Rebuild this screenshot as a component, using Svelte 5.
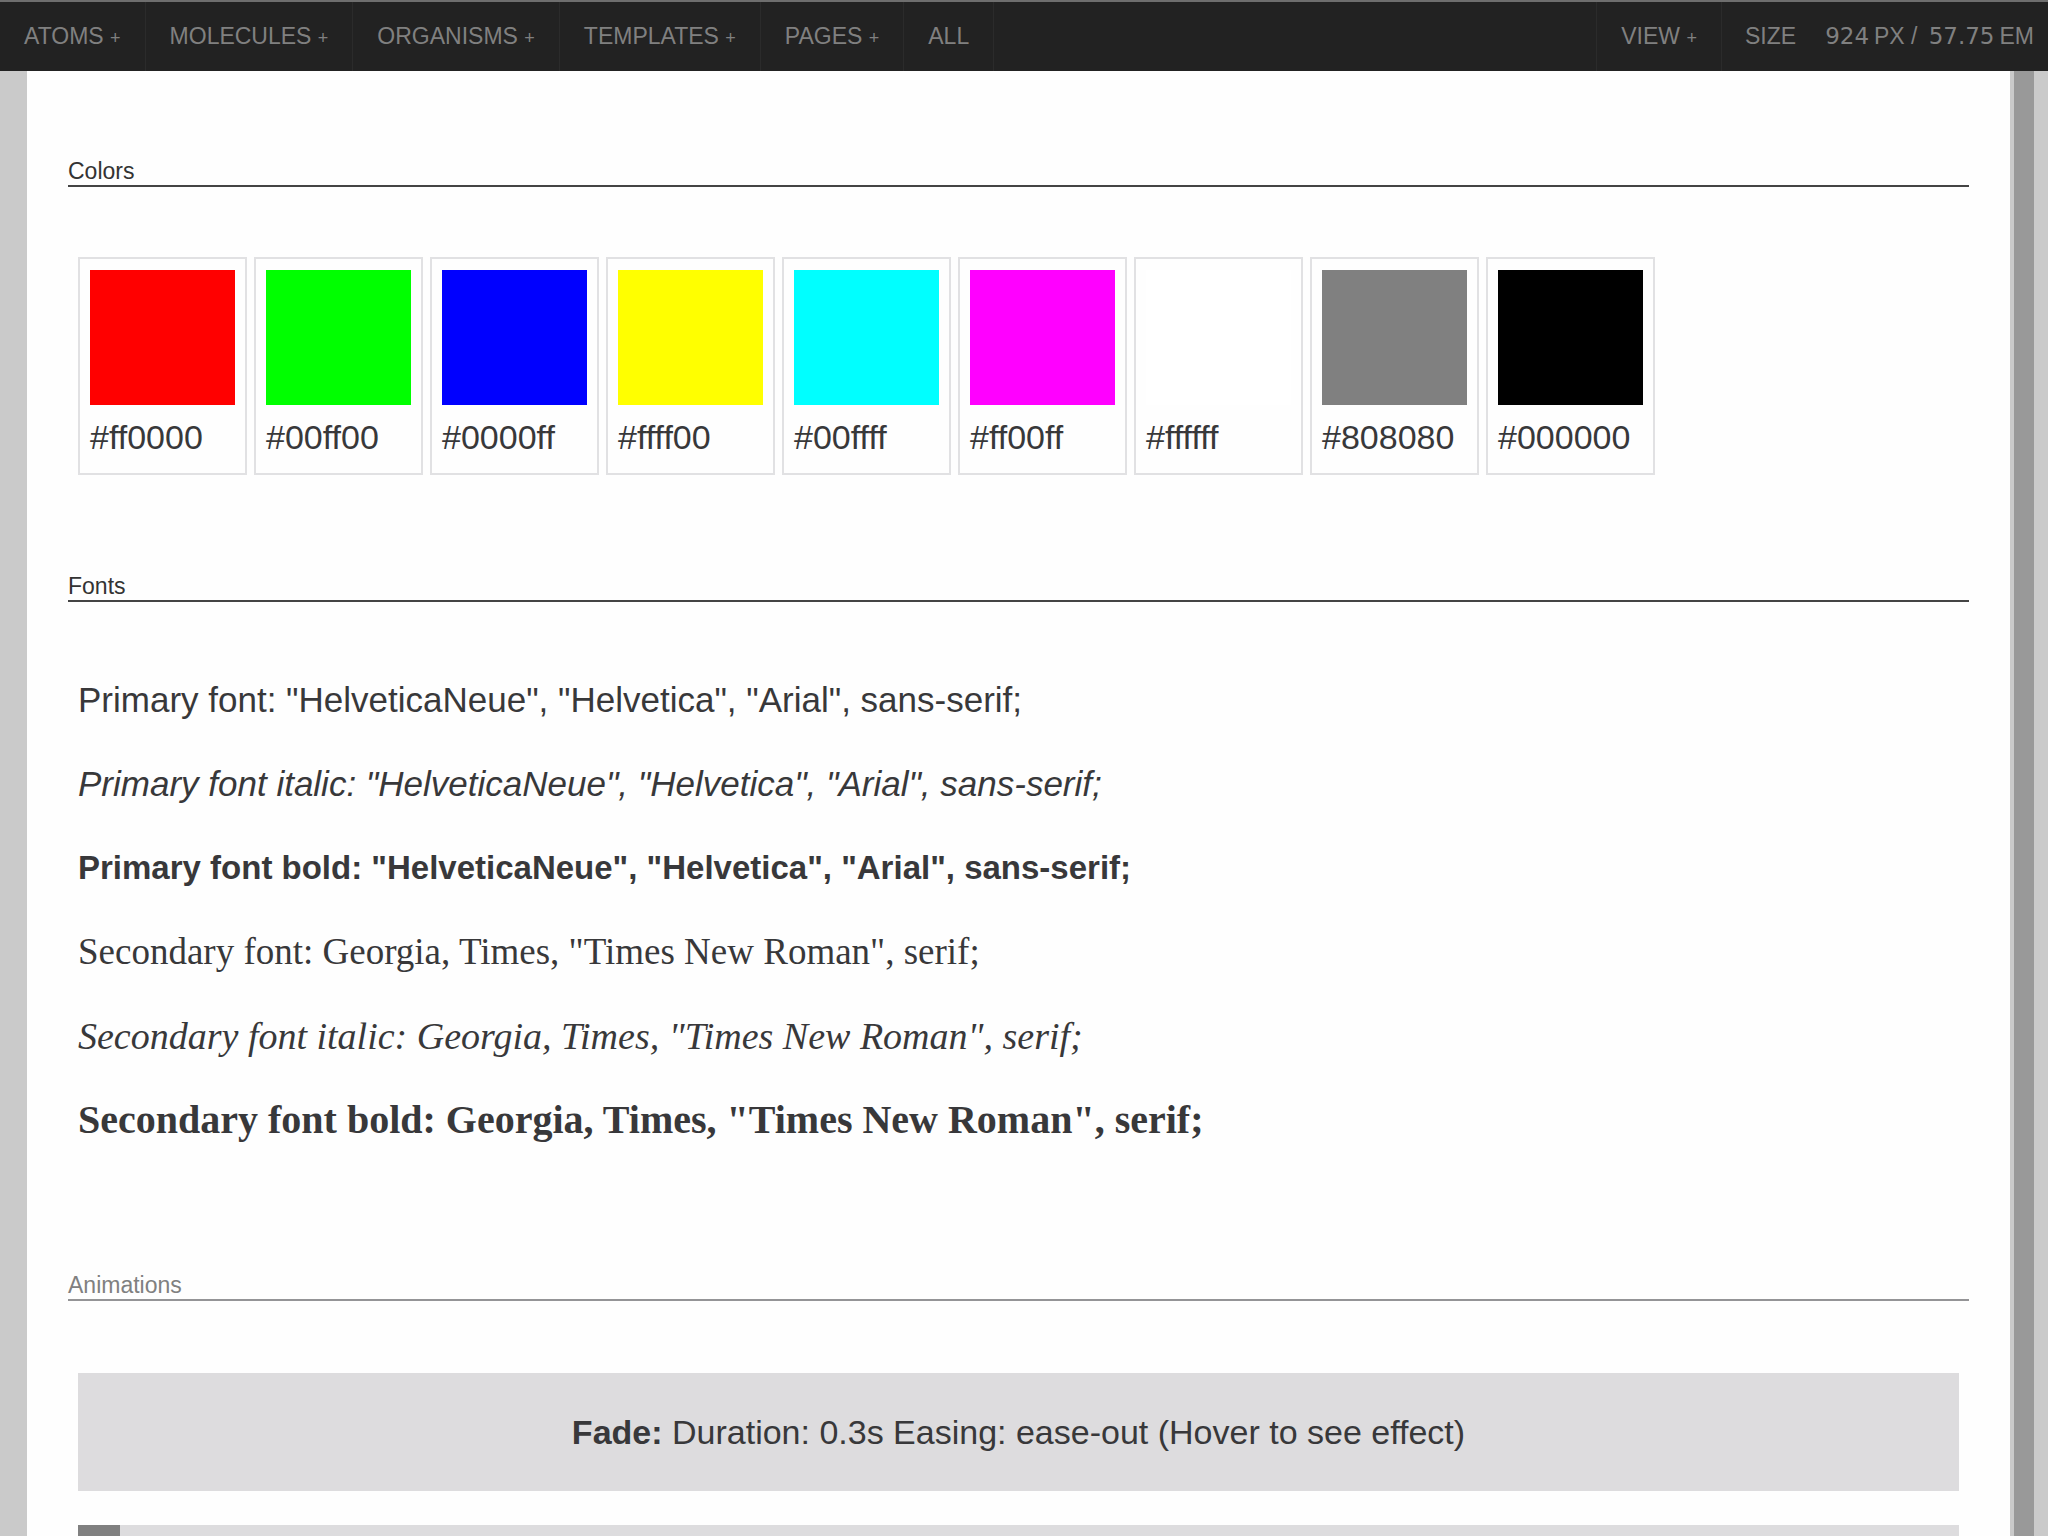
<script lang="ts">
  const patterns = [
    { label: 'Atoms', menu: true },
    { label: 'Molecules', menu: true },
    { label: 'Organisms', menu: true },
    { label: 'Templates', menu: true },
    { label: 'Pages', menu: true },
    { label: 'All', menu: false }
  ];

  const colors = [
    '#ff0000',
    '#00ff00',
    '#0000ff',
    '#ffff00',
    '#00ffff',
    '#ff00ff',
    '#ffffff',
    '#808080',
    '#000000'
  ];

  const primary = '"HelveticaNeue", "Helvetica", "Arial", sans-serif;';
  const secondary = 'Georgia, Times, "Times New Roman", serif;';

  let px = $state('924');
  let em = $state('57.75');
</script>

<div class="shell">
  <header class="bar">
    <nav class="nav">
      {#each patterns as item (item.label)}
        <a class="nav-item" href="#{item.label.toLowerCase()}">
          {item.label}{#if item.menu}&nbsp;<span class="plus">+</span>{/if}
        </a>
      {/each}
    </nav>
    <div class="controls">
      <button class="nav-item view" type="button">View&nbsp;<span class="plus">+</span></button>
      <form class="size" onsubmit={(e) => e.preventDefault()}>
        <label for="size-px">Size</label>
        <div class="fields">
          <input id="size-px" class="px" bind:value={px} />
          <span>px /</span>
          <input class="em" aria-label="Size in em" bind:value={em} />
          <span>em</span>
        </div>
      </form>
    </div>
  </header>

  <div class="viewport">
    <main class="page">
      <section class="pattern">
        <h2><a href="#colors">Colors</a></h2>
        <ul class="swatches">
          {#each colors as color (color)}
            <li>
              <span class="swatch" style="background: {color}"></span>
              <span class="label">{color}</span>
            </li>
          {/each}
        </ul>
      </section>

      <section class="pattern">
        <h2><a href="#fonts">Fonts</a></h2>
        <div class="fonts">
          <p class="primary">Primary font: {primary}</p>
          <p class="primary italic">Primary font italic: {primary}</p>
          <p class="primary bold">Primary font bold: {primary}</p>
          <p class="secondary">Secondary font: {secondary}</p>
          <p class="secondary italic">Secondary font italic: {secondary}</p>
          <p class="secondary bold">Secondary font bold: {secondary}</p>
        </div>
      </section>

      <section class="pattern">
        <h2 class="hovered"><a href="#animations">Animations</a></h2>
        <div class="demos">
          <div class="demo fade"><strong>Fade:</strong> Duration: 0.3s Easing: ease-out (Hover to see effect)</div>
          <div class="demo"><span class="mover"></span></div>
        </div>
      </section>
    </main>
    <div class="handle"></div>
  </div>
</div>

<style>
  :global(body) {
    background: #cacaca;
  }

  .shell {
    display: flex;
    flex-direction: column;
    height: 100vh;
    overflow: hidden;
    color: #38383a;
    font-family: "Liberation Sans", Arial, sans-serif;
    font-size: 34px;
    line-height: 50px;
  }

  .bar {
    display: flex;
    flex-shrink: 0;
    justify-content: space-between;
    height: 69px;
    background: #222;
    border-top: 2px solid #6e6e6e;
    color: #808080;
    font-size: 23px;
    line-height: 69px;
    text-transform: uppercase;
  }

  .nav,
  .controls,
  .size,
  .fields {
    display: flex;
  }

  .nav-item {
    padding: 0 24px;
    border: 0;
    border-right: 1px solid #2b2b2b;
    background: none;
    color: inherit;
    font: inherit;
    text-decoration: none;
    text-transform: inherit;
    white-space: nowrap;
    cursor: pointer;
  }

  .view {
    border-left: 1px solid #2b2b2b;
  }

  .plus {
    font-size: 18px;
    line-height: 1;
  }

  .size {
    gap: 28px;
    padding: 0 14px 0 23px;
  }

  .fields {
    align-items: baseline;
    gap: 5px;
  }

  .fields input {
    box-sizing: border-box;
    padding: 0;
    border: 0;
    background: none;
    color: inherit;
    font-family: "DejaVu Sans", sans-serif;
    font-size: 23px;
    text-align: right;
  }

  .px {
    width: 45px;
  }

  .em {
    width: 72px;
  }

  .viewport {
    display: flex;
    flex: 1;
    min-height: 0;
    padding: 0 14px 0 27px;
    background: #cacaca;
  }

  .page {
    display: flex;
    flex: 1;
    flex-direction: column;
    gap: 97px;
    padding: 86px 41px 0;
    background: #fefefe;
  }

  .handle {
    width: 20px;
    margin-left: 4px;
    background: #999;
  }

  h2 {
    margin: 0 0 70px;
    border-bottom: 2px solid #444;
    font-size: 23px;
    font-weight: 400;
    line-height: 28px;
  }

  h2 a {
    color: #333;
    text-decoration: none;
  }

  .hovered {
    border-color: #949496;
  }

  .hovered a {
    color: #808080;
  }

  .swatches {
    display: flex;
    flex-wrap: wrap;
    gap: 7px;
    margin: 0;
    padding: 0 10px;
    list-style: none;
  }

  .swatches li {
    width: 145px;
    padding: 11px 10px;
    border: 2px solid #e1e1e3;
  }

  .swatch {
    display: block;
    height: 135px;
  }

  .label {
    display: block;
    margin-top: 7px;
  }

  .fonts {
    display: flex;
    flex-direction: column;
    gap: 34px;
    padding: 3px 10px 29px;
  }

  p {
    margin: 0;
  }

  .primary {
    font-size: 35px;
  }

  .primary.bold {
    font-size: 33px;
  }

  .secondary {
    font-family: Georgia, "Liberation Serif", serif;
    font-size: 37px;
  }

  .secondary.italic {
    font-size: 38px;
  }

  .secondary.bold {
    font-size: 40px;
  }

  .italic {
    font-style: italic;
  }

  .bold {
    font-weight: 700;
  }

  .demos {
    display: flex;
    flex-direction: column;
    gap: 34px;
    padding: 2px 10px 0;
  }

  .demo {
    display: flex;
    height: 118px;
    background: #dddcde;
    line-height: 118px;
  }

  .fade {
    display: block;
    text-align: center;
    transition: opacity 0.3s ease-out;
  }

  .fade:hover {
    opacity: 0.3;
  }

  .mover {
    width: 42px;
    background: #808080;
  }
</style>
